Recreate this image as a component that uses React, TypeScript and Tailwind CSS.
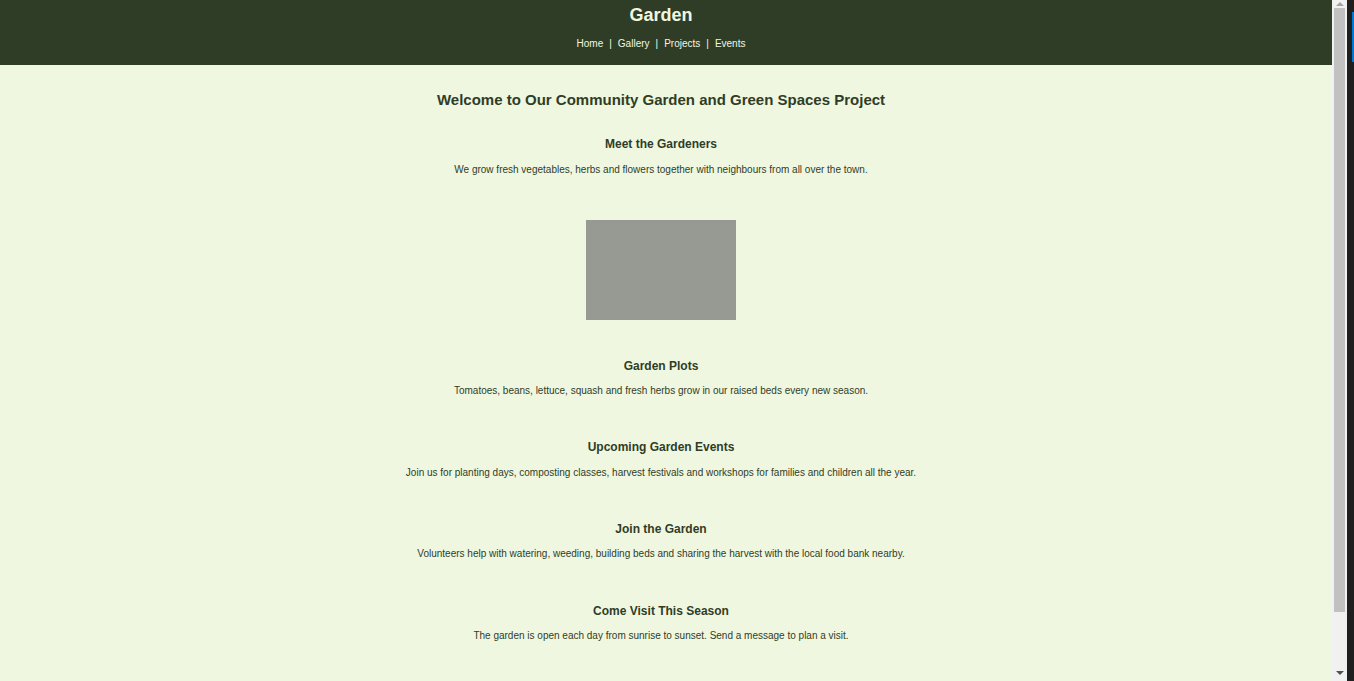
import React from "react";

const sections = [
  {
    h: "Garden Plots",
    p: "Tomatoes, beans, lettuce, squash and fresh herbs grow in our raised beds every new season.",
    hm: "mt-[38px]",
    pm: "mt-[10px]",
  },
  {
    h: "Upcoming Garden Events",
    p: "Join us for planting days, composting classes, harvest festivals and workshops for families and children all the year.",
    hm: "mt-[41px]",
    pm: "mt-[11px]",
  },
  {
    h: "Join the Garden",
    p: "Volunteers help with watering, weeding, building beds and sharing the harvest with the local food bank nearby.",
    hm: "mt-[41px]",
    pm: "mt-[10px]",
  },
  {
    h: "Come Visit This Season",
    p: "The garden is open each day from sunrise to sunset. Send a message to plan a visit.",
    hm: "mt-[42px]",
    pm: "mt-[10px]",
  },
];

function Scrollbar() {
  return (
    <div className="flex h-full">
      <div className="w-[15px] h-full bg-[#f1f1f1] flex flex-col items-center">
        <div className="h-[8px] flex items-center justify-center">
          <div className="w-0 h-0 border-l-[4px] border-r-[4px] border-b-[4px] border-l-transparent border-r-transparent border-b-[#a3a3a3]" />
        </div>
        <div className="w-[11px] h-[604px] bg-[#c1c1c1]" />
        <div className="flex-1" />
        <div className="h-[16px] flex items-center justify-center">
          <div className="w-0 h-0 border-l-[4px] border-r-[4px] border-t-[4px] border-l-transparent border-r-transparent border-t-[#505050]" />
        </div>
      </div>
      <div className="w-[7px] h-full bg-[#1f1f1f] flex justify-end">
        <div className="w-[2px] mt-[12px] h-[50px] bg-[#0078d4]" />
      </div>
    </div>
  );
}

export default function App() {
  return (
    <div
      className="h-[681px] overflow-hidden flex bg-[#f0f7e1] text-[#2f3d27]"
      style={{ fontFamily: '"Liberation Sans", Arial, sans-serif' }}
    >
      <div className="flex-1 min-w-0">
        <header className="h-[65px] bg-[#2f3d27] flex flex-col items-center pr-[10px] text-[#f0f7e1]">
          <div className="mt-[4px] text-[18px] leading-[22px] font-bold">Garden</div>
          <nav className="mt-[11px] flex items-center text-[10px] leading-[14px]">
            <a>Home</a>
            <span className="mx-[6px]">|</span>
            <a>Gallery</a>
            <span className="mx-[6px]">|</span>
            <a>Projects</a>
            <span className="mx-[6px]">|</span>
            <a>Events</a>
          </nav>
        </header>
        <main className="flex flex-col items-center text-center pr-[10px] pb-[108px]">
          <h1 className="mt-[25px] text-[15px] leading-[20px] font-bold">
            Welcome to Our Community Garden and Green Spaces Project
          </h1>
          <h3 className="mt-[26px] text-[12px] leading-[16px] font-bold">Meet the Gardeners</h3>
          <p className="mt-[11px] text-[10px] leading-[14px]">
            We grow fresh vegetables, herbs and flowers together with neighbours from all over the town.
          </p>
          <div className="mt-[43px] w-[150px] h-[100px] bg-[#979a93]" />
          {sections.map((s, i) => (
            <section key={i} className={s.hm}>
              <h3 className="text-[12px] leading-[16px] font-bold">{s.h}</h3>
              <p className={`${s.pm} text-[10px] leading-[14px]`}>{s.p}</p>
            </section>
          ))}
        </main>
      </div>
      <Scrollbar />
    </div>
  );
}
